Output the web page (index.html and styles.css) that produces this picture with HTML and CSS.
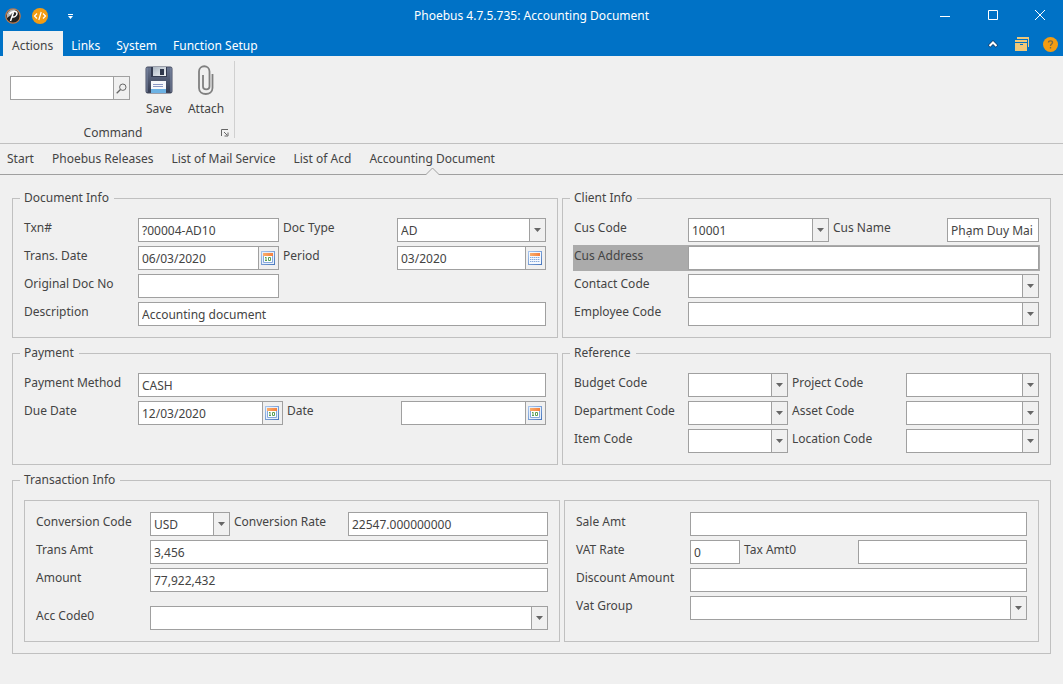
FILE: index.html
```html
<!DOCTYPE html>
<html lang="en">
<head>
<meta charset="utf-8">
<title>Phoebus 4.7.5.735: Accounting Document</title>
<link rel="stylesheet" href="styles.css">
</head>
<body>
<svg class="defs" aria-hidden="true">
  <defs>
    <linearGradient id="calEdge" x1="0" y1="0" x2="1" y2="1"><stop offset="0" stop-color="#a9c6ee"/><stop offset="1" stop-color="#4a78bd"/></linearGradient>
    <linearGradient id="calHead" x1="0" y1="0" x2="1" y2="0"><stop offset="0" stop-color="#f9ae6c"/><stop offset="1" stop-color="#f57f3c"/></linearGradient>
    <symbol id="arrow" viewBox="0 0 7 4"><path d="M0 0h7L3.500 4z" fill="#666"/></symbol>
    <symbol id="day" viewBox="0 0 14 14">
      <rect x=".5" y=".5" width="13" height="13" fill="#e6effb" stroke="url(#calEdge)"/>
      <path d="M2.500 4v7.500h9V4" fill="#fff" stroke="#86a9dc"/>
      <rect x="2" y="2" width="10" height="3" fill="url(#calHead)"/>
      <path d="M5 6v4M4 6.500h1M4 9.500h2M7.500 6.500h2v3h-2z" fill="none" stroke="#5aa055"/>
    </symbol>
    <symbol id="month" viewBox="0 0 14 14">
      <rect x=".5" y=".5" width="13" height="13" fill="#f4f8fe" stroke="url(#calEdge)"/>
      <rect x="2" y="2" width="10" height="3" fill="url(#calHead)"/>
      <path d="M2 6.500h10M2 8.500h10M2 10.500h10" stroke="#86a9dc" stroke-dasharray="1.400 .6"/>
    </symbol>
  </defs>
</svg>

<header class="titlebar">
  <div class="quick">
    <svg width="16" height="16" viewBox="0 0 16 16"><circle cx="8" cy="8" r="7.200" fill="#222" stroke="#c77a45" stroke-width="1.200"/><path d="M2 6a6.500 6.500 0 0 1 9-4L6 7 2 10z" fill="#b5b5b5"/><path d="M5.500 13 8.500 4.500M4.500 6C6 3.500 12 2.200 12 5.200 12 8 9.500 9.300 7.500 9" fill="none" stroke="#fff" stroke-width="1.500"/></svg>
    <svg width="16" height="16" viewBox="0 0 16 16"><circle cx="8" cy="8" r="8" fill="#f39c12"/><path d="M5 5.500 2.500 8 5 10.500M11 5.500 13.500 8 11 10.500M9.200 4 6.800 12" fill="none" stroke="#fff" stroke-width="1.200"/></svg>
    <svg class="more" width="5" height="5" viewBox="0 0 5 5"><path d="M0 0h5v1H0zM0 2h5L2.500 5z" fill="#fff"/></svg>
  </div>
  <h1 class="title">Phoebus 4.7.5.735: Accounting Document</h1>
  <div class="window-buttons">
    <button aria-label="Minimize"><svg width="10" height="10" viewBox="0 0 10 10"><path d="M0 6.500h10" stroke="#fff"/></svg></button>
    <button aria-label="Maximize"><svg width="10" height="10" viewBox="0 0 10 10"><path d="M.5.5h9v9h-9z" fill="none" stroke="#fff"/></svg></button>
    <button aria-label="Close"><svg width="10" height="10" viewBox="0 0 10 10"><path d="M0 0l10 10M10 0 0 10" stroke="#fff"/></svg></button>
  </div>
</header>

<nav class="menu">
  <a class="active" href="#actions">Actions</a>
  <a href="#links">Links</a>
  <a href="#system">System</a>
  <a href="#setup">Function Setup</a>
  <div class="menu-tools">
    <button class="collapse" aria-label="Collapse ribbon"><svg width="10" height="8" viewBox="0 0 10 8"><path d="M1 6.500l4-4 4 4" fill="none" stroke="#17406b" stroke-width="3.600"/><path d="M1.500 6l3.500-3.500L8.500 6" fill="none" stroke="#fff" stroke-width="2"/></svg></button>
    <button aria-label="Windows"><svg width="14" height="14" viewBox="0 0 14 14"><path d="M2 0h12v10h-1V2H2z" fill="#f0c878"/><path d="M0 3h12v2H0zM0 6h12v8H0z" fill="#f0c878"/><path d="M5 7.500h3" stroke="#0072c6"/></svg></button>
    <button aria-label="Help"><svg width="15" height="15" viewBox="0 0 15 15"><circle cx="7.500" cy="7.500" r="7.500" fill="#f39c12"/><path d="M5.500 5.500c0-2.300 4-2.300 4 0 0 1.500-2 1.500-2 3.500M7.500 10v1.500" fill="none" stroke="#7a6a45" stroke-width="1.300"/></svg></button>
  </div>
</nav>

<section class="ribbon">
  <div class="ribbon-group">
    <div class="ribbon-items">
      <div class="search">
        <input type="text" aria-label="Search command">
        <button aria-label="Search"><svg width="11" height="11" viewBox="0 0 11 11"><circle cx="6.800" cy="4.200" r="3.200" fill="none" stroke="#666"/><path d="M4.500 6.500.7 10.300" stroke="#666" stroke-width="1.300"/></svg></button>
      </div>
      <button class="tool">
        <svg width="28" height="28" viewBox="0 0 28 28"><defs><linearGradient id="disk" x1="0" y1="0" x2="0" y2="1"><stop offset="0" stop-color="#6b7690"/><stop offset="1" stop-color="#343b50"/></linearGradient><linearGradient id="metal" x1="0" y1="0" x2="1" y2="1"><stop offset="0" stop-color="#aab4c0"/><stop offset="1" stop-color="#f2f4f6"/></linearGradient></defs><rect x="1" y="1" width="26" height="26" rx="1.500" fill="url(#disk)" stroke="#464d62"/><path d="M2 26V2M26 2v24" stroke="#7f8aa5"/><rect x="6" y="1" width="16" height="10" fill="#343b50"/><rect x="8" y="1" width="13" height="9" fill="url(#metal)"/><rect x="15" y="3" width="4" height="6" fill="#30384c"/><rect x="6" y="15" width="15" height="12" fill="#f7f8fb"/><rect x="6" y="23" width="15" height="4" fill="#6cb2e4"/><path d="M8 18.500h10M8 20.500h10" stroke="#8b98c4"/></svg>
        Save
      </button>
      <button class="tool attach">
        <svg width="28" height="32" viewBox="0 0 28 32"><path d="M11 10v11.500c0 3.800 6.500 3.800 6.500 0V6.500C17.500-.5 7-.5 7 6.500V23c0 8 13.500 8 13.500 0V9" fill="none" stroke="#808080" stroke-width="1.800"/></svg>
        Attach
      </button>
    </div>
    <div class="ribbon-caption">
      <span>Command</span>
      <button aria-label="Command options"><svg width="8" height="8" viewBox="0 0 8 8"><path d="M.5 7V.5H7M3 3l3 3M7 3.500V7H3.500" fill="none" stroke="#666"/></svg></button>
    </div>
  </div>
</section>

<nav class="doc-tabs">
  <a href="#start">Start</a>
  <a href="#releases">Phoebus Releases</a>
  <a href="#mail">List of Mail Service</a>
  <a href="#acd">List of Acd</a>
  <a class="current" href="#doc">Accounting Document<svg class="notch" width="13" height="8" viewBox="0 0 13 8"><path d="M0 7.500h.5l6-6 6 6h.5v.5H0z" fill="#f0f0f0"/><path d="M0 7.500l6.500-6.500 6.500 6.500" fill="none" stroke="#a0a0a0"/></svg></a>
</nav>

<main class="form">
  <fieldset class="group">
    <legend>Document Info</legend>
    <div class="fields document">
      <label for="txn">Txn#</label><input id="txn" type="text" value="?00004-AD10">
      <label class="second" for="doctype">Doc Type</label><div class="combo"><select id="doctype"><option>AD</option></select><svg><use href="#arrow"/></svg></div>
      <label for="tdate">Trans. Date</label><div class="picker"><input id="tdate" type="text" value="06/03/2020"><button aria-label="Pick date"><svg><use href="#day"/></svg></button></div>
      <label class="second" for="period">Period</label><div class="picker"><input id="period" type="text" value="03/2020"><button aria-label="Pick period"><svg><use href="#month"/></svg></button></div>
      <label for="orig">Original Doc No</label><input id="orig" type="text">
      <label class="first" for="desc">Description</label><input class="wide" id="desc" type="text" value="Accounting document">
    </div>
  </fieldset>

  <fieldset class="group">
    <legend>Client Info</legend>
    <div class="fields client">
      <label for="cuscode">Cus Code</label><div class="combo"><select id="cuscode"><option>10001</option></select><svg><use href="#arrow"/></svg></div>
      <label class="second" for="cusname">Cus Name</label><input id="cusname" type="text" value="Phạm Duy Mai">
      <label class="selected" for="addr">Cus Address</label><input class="wide selected" id="addr" type="text">
      <label for="contact">Contact Code</label><div class="combo wide"><select id="contact"><option></option></select><svg><use href="#arrow"/></svg></div>
      <label for="employee">Employee Code</label><div class="combo wide"><select id="employee"><option></option></select><svg><use href="#arrow"/></svg></div>
    </div>
  </fieldset>

  <fieldset class="group">
    <legend>Payment</legend>
    <div class="fields payment">
      <label for="method">Payment Method</label><input class="wide" id="method" type="text" value="CASH">
      <label for="due">Due Date</label><div class="picker"><input id="due" type="text" value="12/03/2020"><button aria-label="Pick due date"><svg><use href="#day"/></svg></button></div>
      <label class="second" for="date">Date</label><div class="picker"><input id="date" type="text"><button aria-label="Pick date"><svg><use href="#day"/></svg></button></div>
    </div>
  </fieldset>

  <fieldset class="group">
    <legend>Reference</legend>
    <div class="fields reference">
      <label for="budget">Budget Code</label><div class="combo"><select id="budget"><option></option></select><svg><use href="#arrow"/></svg></div>
      <label class="second" for="project">Project Code</label><div class="combo"><select id="project"><option></option></select><svg><use href="#arrow"/></svg></div>
      <label for="dept">Department Code</label><div class="combo"><select id="dept"><option></option></select><svg><use href="#arrow"/></svg></div>
      <label class="second" for="asset">Asset Code</label><div class="combo"><select id="asset"><option></option></select><svg><use href="#arrow"/></svg></div>
      <label for="item">Item Code</label><div class="combo"><select id="item"><option></option></select><svg><use href="#arrow"/></svg></div>
      <label class="second" for="location">Location Code</label><div class="combo"><select id="location"><option></option></select><svg><use href="#arrow"/></svg></div>
    </div>
  </fieldset>

  <fieldset class="group transaction">
    <legend>Transaction Info</legend>
    <div class="panels">
      <div class="panel fields conversion">
        <label for="ccode">Conversion Code</label><div class="combo"><select id="ccode"><option>USD</option></select><svg><use href="#arrow"/></svg></div>
        <label class="second" for="crate">Conversion Rate</label><input id="crate" type="text" value="22547.000000000">
        <label for="tamt">Trans Amt</label><input class="wide" id="tamt" type="text" value="3,456">
        <label for="amount">Amount</label><input class="wide" id="amount" type="text" value="77,922,432">
        <label class="apart" for="acc">Acc Code0</label><div class="combo wide apart"><select id="acc"><option></option></select><svg><use href="#arrow"/></svg></div>
      </div>
      <div class="panel fields sale">
        <label for="sale">Sale Amt</label><input class="wide" id="sale" type="text">
        <label for="vat">VAT Rate</label><input id="vat" type="text" value="0">
        <label class="second" for="tax">Tax Amt0</label><input id="tax" type="text">
        <label for="discount">Discount Amount</label><input class="wide" id="discount" type="text">
        <label for="vatgroup">Vat Group</label><div class="combo wide"><select id="vatgroup"><option></option></select><svg><use href="#arrow"/></svg></div>
      </div>
    </div>
  </fieldset>
</main>
</body>
</html>
```
FILE: styles.css
```css
* { box-sizing: border-box; }

body {
  margin: 0;
  min-height: 100vh;
  background: #f0f0f0;
  color: #444;
  font: 12px/20px "Noto Sans", "Open Sans", sans-serif;
}

button, input, select { font: inherit; color: inherit; margin: 0; }
button { padding: 0; border: 0; background: none; display: flex; align-items: center; justify-content: center; }
a { color: inherit; text-decoration: none; }
svg { display: block; flex: none; }
.defs { position: absolute; width: 0; height: 0; }

/* Title bar */
.titlebar {
  display: grid;
  grid-template-columns: 1fr auto 1fr;
  height: 31px;
  background: #0072c6;
  color: #fff;
}
.quick { display: flex; align-items: center; gap: 11px; padding-left: 5px; }
.more { margin-left: 9px; }
.title { margin: 0; font-size: 12px; font-weight: 400; line-height: 32px; }
.window-buttons { display: flex; justify-content: flex-end; }
.window-buttons button { width: 48px; height: 30px; }
.window-buttons button:last-child { width: 46px; }

/* Ribbon tabs */
.menu { display: flex; height: 25px; padding-left: 3px; background: #0072c6; color: #fff; line-height: 30px; }
.menu > a { padding: 0 8px; }
.menu .active { padding: 0 10px 0 9px; background: #f0f0f0; color: #444; height: 25px; }
.menu-tools { display: flex; align-items: center; gap: 14px; margin-left: auto; padding: 1px 5px 0 0; }
.collapse { margin-right: 3px; }

/* Ribbon */
.ribbon { display: flex; padding: 5px 0; border-bottom: 1px solid #c0c0c0; }
.ribbon-group { padding: 0 5px 0 10px; border-right: 1px solid #d0d0d0; }
.ribbon-items { display: flex; height: 58px; }
.search { display: flex; width: 120px; height: 24px; margin: 15px 10px 0 0; border: 1px solid #a0a0a0; }
.search input { flex: 1; min-width: 0; padding: 0 3px; border: 0; background: #fff; }
.search button { width: 16px; border-left: 1px solid #a0a0a0; }
.tool { flex-direction: column; justify-content: space-between; width: 38px; padding-top: 5px; }
.attach { width: 51px; padding: 4px 0 0 5px; }
.ribbon-caption { display: flex; justify-content: center; align-items: center; height: 19px; padding-top: 8px; }
.ribbon-caption span { flex: 1; text-align: center; padding-right: 5px; }

/* Document tabs */
.doc-tabs { display: flex; gap: 18px; height: 31px; padding-left: 7px; border-bottom: 1px solid #a0a0a0; line-height: 30px; }
.current { position: relative; }
.notch { position: absolute; bottom: -1px; left: calc(50% - 6px); }

/* Form */
.form { display: grid; grid-template-columns: 546fr 489fr; gap: 6px 4px; padding: 14px 12px; }
.group { min-width: 0; margin: 0; padding: 10px 11px 11px; border: 1px solid #c0c0c0; }
.group legend { height: 19px; margin-left: -4px; padding: 0 5px 0 4px; line-height: 18px; }
.transaction { grid-column: 1 / -1; }
.fields { display: grid; grid-auto-rows: 24px; row-gap: 4px; }
.document { grid-template-columns: 114px 141fr 118px 149fr; }
.client { grid-template-columns: 114px 141fr 118px 92fr; }
.payment { grid-template-columns: 114px 145fr 118px 145fr; }
.reference { grid-template-columns: 114px 100fr 118px 133fr; }
.conversion { grid-template-columns: 114px 80fr 118px 200fr; grid-template-rows: 24px 24px 24px 34px; }
.sale { grid-template-columns: 114px 50fr 118px 169fr; }
.wide { grid-column: 2 / -1; }
.first { grid-column: 1; }
.second { padding-left: 4px; }
.apart { margin-top: 10px; }
.panels { display: grid; grid-template-columns: 536fr 475fr; gap: 4px; }
.panel { padding: 11px; border: 1px solid #c0c0c0; }

label { white-space: nowrap; }

.fields input, .fields select {
  width: 100%;
  min-width: 0;
  height: 24px;
  padding: 0 3px;
  border: 1px solid #a0a0a0;
  border-radius: 0;
  background: #fff;
  outline: 0;
}
.fields select { appearance: none; padding: 1px 20px 0 3px; }
.combo { position: relative; min-width: 0; }
.combo svg {
  position: absolute;
  inset: 1px 1px 1px auto;
  width: 16px;
  height: 22px;
  padding: 9px 4px 9px 4px;
  border-left: 1px solid #a0a0a0;
  background: #f0f0f0;
  pointer-events: none;
}
.picker { display: flex; min-width: 0; border: 1px solid #a0a0a0; }
.fields .picker input { flex: 1; width: auto; height: 22px; border: 0; }
.picker button { width: 20px; padding-right: 1px; border-left: 1px solid #a0a0a0; }
.picker svg { width: 14px; height: 14px; }
.selected { box-shadow: 0 0 0 1px #ababab; }
label.selected { background: #ababab; }
```
